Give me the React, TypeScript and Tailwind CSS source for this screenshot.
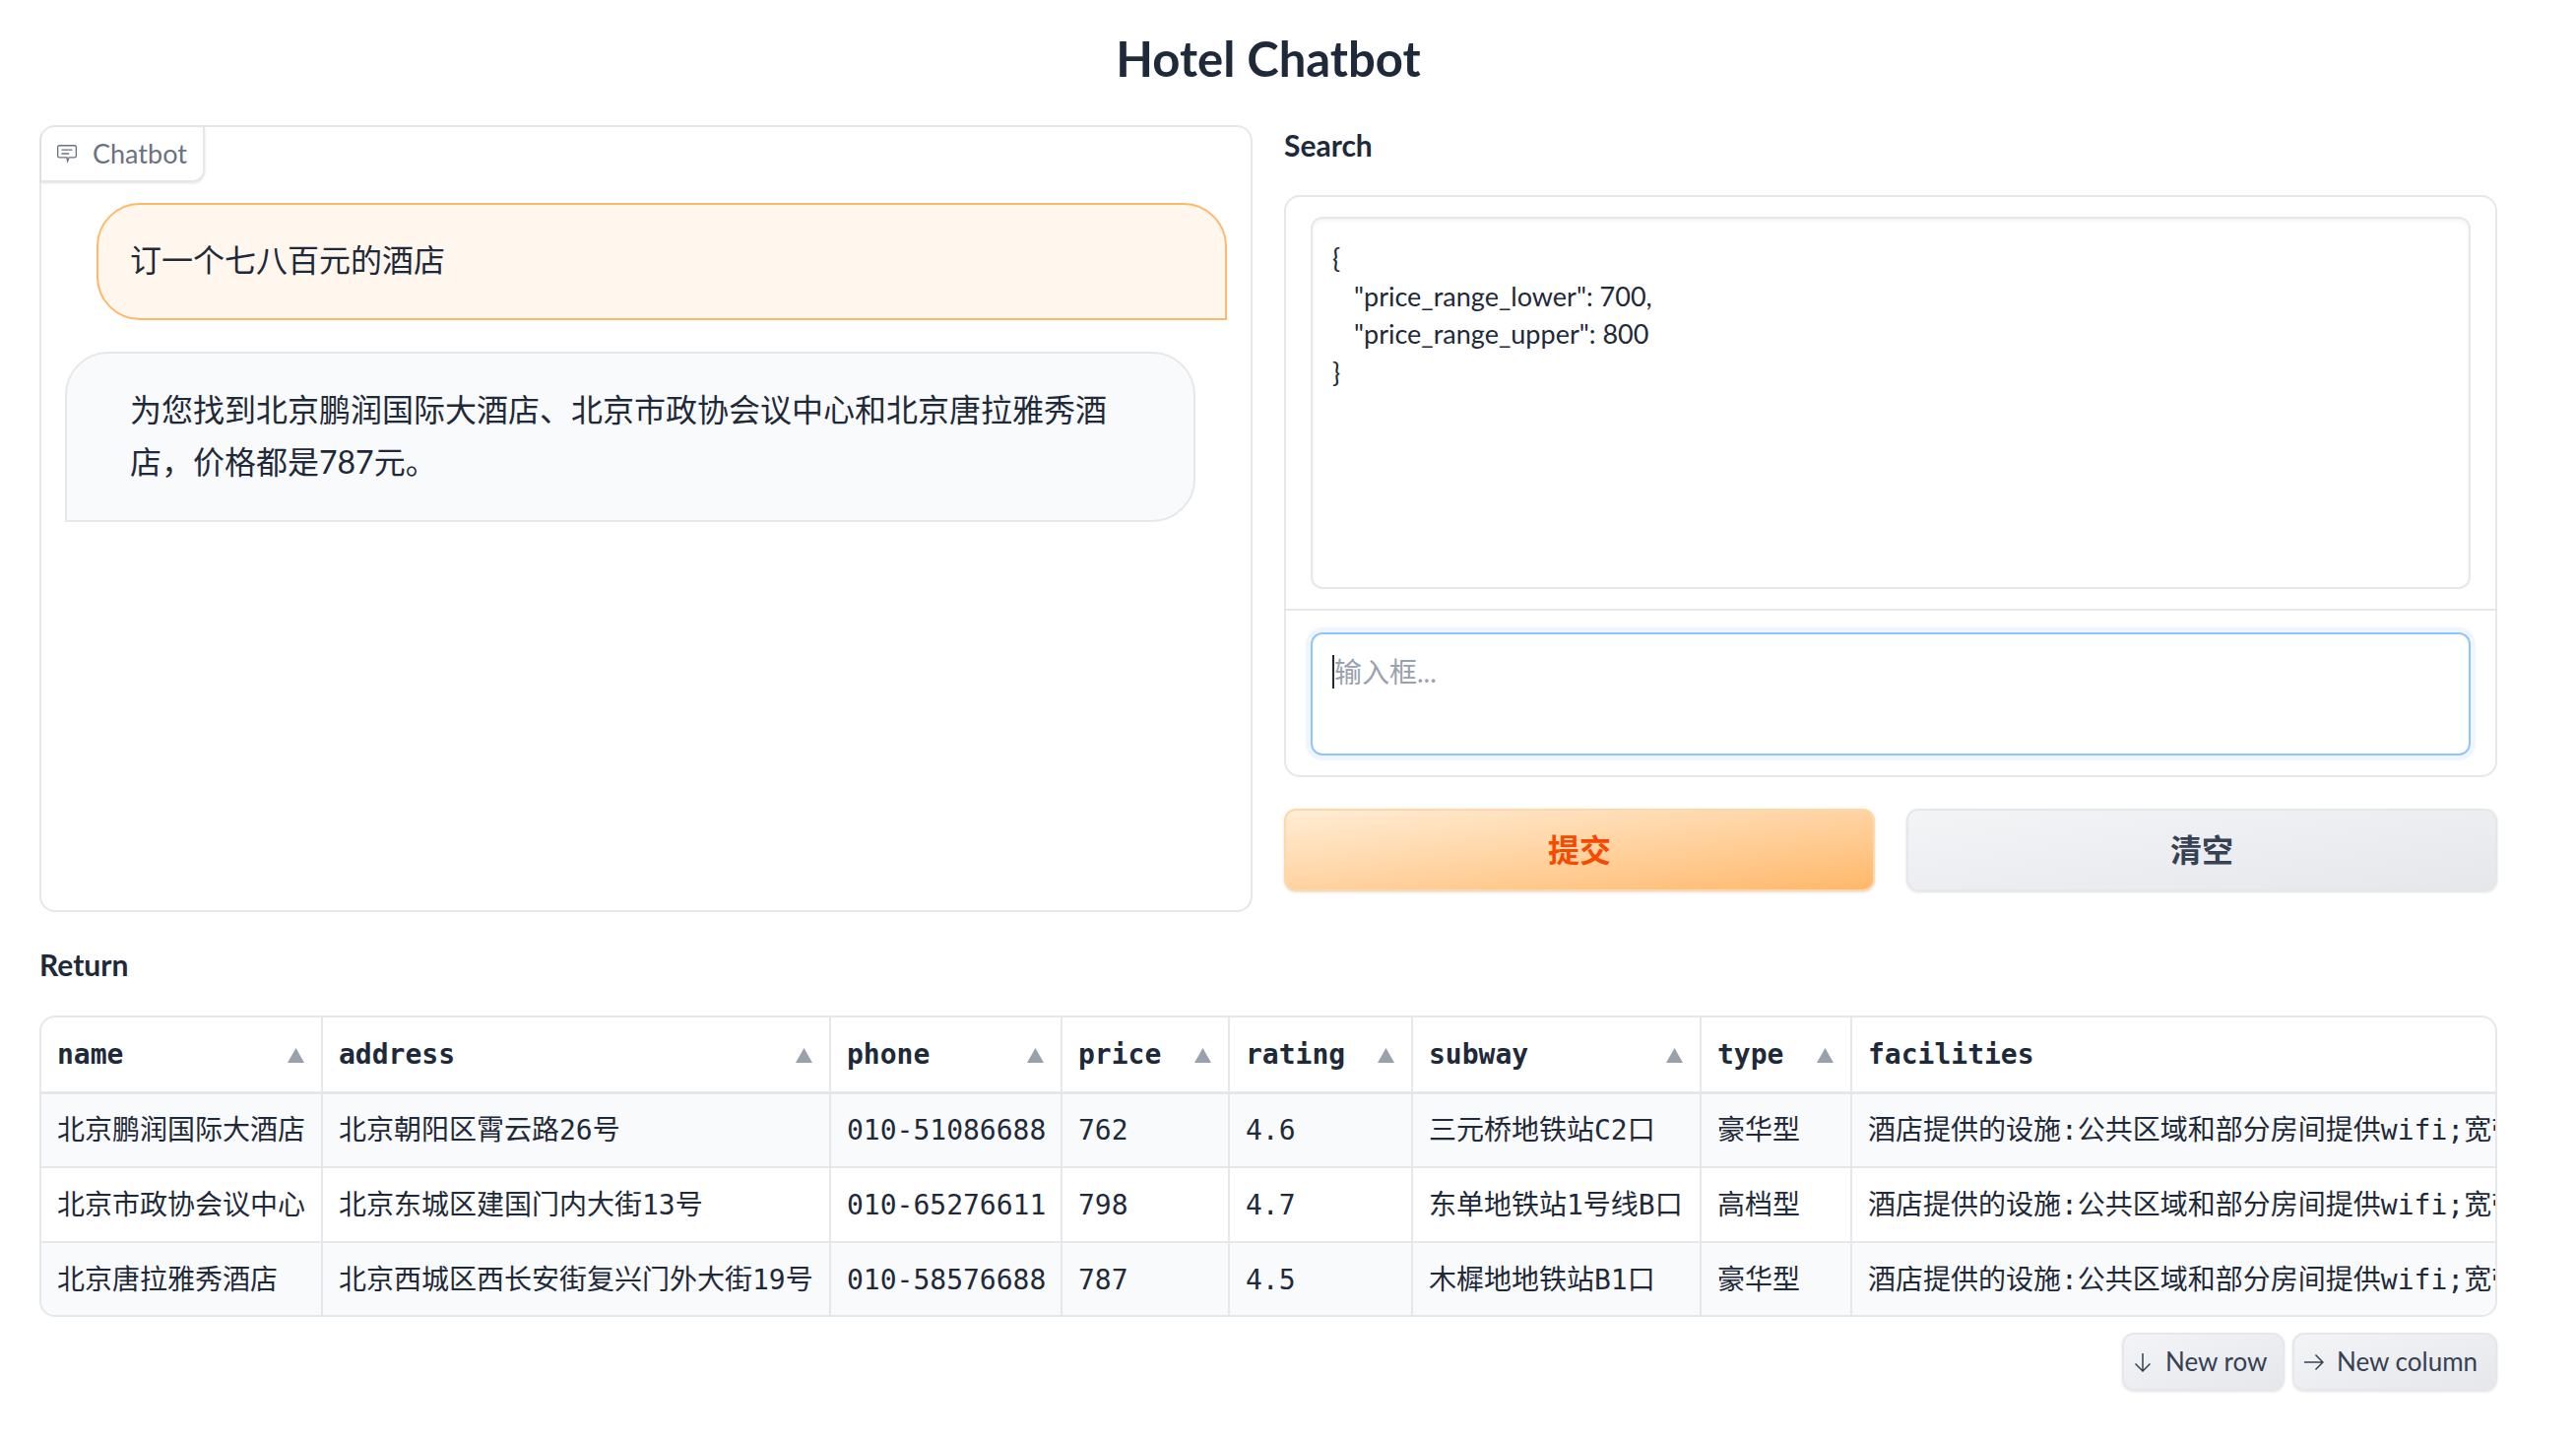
const columns = [
  { name: "name", width: "w-[285px]" },
  { name: "address", width: "w-[516px]" },
  { name: "phone", width: "w-[235px]" },
  { name: "price", width: "w-[170px]" },
  { name: "rating", width: "w-[186px]" },
  { name: "subway", width: "w-[293px]" },
  { name: "type", width: "w-[153px]" },
  { name: "facilities", width: "w-[654px]" },
];

const facilities = "酒店提供的设施:公共区域和部分房间提供wifi;宽带上网;吹风机;24小时热水;暖气";

const rows = [
  ["北京鹏润国际大酒店", "北京朝阳区霄云路26号", "010-51086688", "762", "4.6", "三元桥地铁站C2口", "豪华型", facilities],
  ["北京市政协会议中心", "北京东城区建国门内大街13号", "010-65276611", "798", "4.7", "东单地铁站1号线B口", "高档型", facilities],
  ["北京唐拉雅秀酒店", "北京西城区西长安街复兴门外大街19号", "010-58576688", "787", "4.5", "木樨地地铁站B1口", "豪华型", facilities],
];

const SortIcon = () => (
  <svg width="17" height="15" viewBox="0 0 17 15" className="mr-[1px] shrink-0 fill-gray-400">
    <polygon points="8.5,0 17,15 0,15" />
  </svg>
);

const ChatIcon = () => (
  <svg width="22" height="22" viewBox="0 0 20 20" fill="none" className="stroke-gray-500" strokeWidth="1.2">
    <path d="M3 2.5h14a1.5 1.5 0 0 1 1.5 1.5v8a1.5 1.5 0 0 1-1.500 1.500h-5l-1.500 3.500-0.500-3.500H3A1.500 1.500 0 0 1 1.500 12V4A1.500 1.500 0 0 1 3 2.500z" />
    <path d="M5 6.500h10M5 10h7" />
  </svg>
);

const DownIcon = () => (
  <svg width="18" height="20" viewBox="0 0 18 20" fill="none" className="stroke-gray-700" strokeWidth="1.5">
    <path d="M9 1v18M1.500 11.500 9 19l7.500-7.500" />
  </svg>
);

const RightIcon = () => (
  <svg width="21" height="18" viewBox="0 0 21 18" fill="none" className="stroke-gray-700" strokeWidth="1.5">
    <path d="M1 9h19M12.500 1.500 20 9l-7.500 7.500" />
  </svg>
);

const App = () => {
  return (
    <div className="min-h-[1464px] bg-white pr-20 pl-10 text-gray-800 font-['Lato','Noto_Sans_CJK_SC',sans-serif]">
      <h1 className="flex h-[127px] items-center justify-center pb-[8px] text-[49px] font-bold">Hotel Chatbot</h1>

      <div className="grid grid-cols-2 gap-8">
        <div className="h-[799px] rounded-2xl border-2 border-gray-200 bg-white">
          <div className="flex h-[56px] w-[166px] items-center gap-[15px] rounded-br-xl border-r-2 border-b-2 border-gray-200 pl-[15px] text-[27px] text-gray-500 shadow-sm">
            <ChatIcon />
            Chatbot
          </div>
          <div className="mt-[21px] mr-6 ml-[56px] flex h-[119px] items-center rounded-[44px] rounded-br-none border-2 border-orange-300 bg-orange-50 pb-[3px] pl-[32px] text-[32px]">
            订一个七八百元的酒店
          </div>
          <div className="mt-[32px] mr-[56px] ml-6 h-[173px] rounded-[44px] rounded-bl-none border-2 border-gray-200 bg-gray-50 pt-[30px] pr-[60px] pl-[64px] text-[32px] leading-[53px]">
            为您找到北京鹏润国际大酒店、北京市政协会议中心和北京唐拉雅秀酒店，价格都是787元。
          </div>
        </div>

        <div>
          <div className="flex h-[71px] items-center pb-[32px] text-[30px] font-bold leading-none">Search</div>
          <div className="rounded-2xl border-2 border-gray-200">
            <div className="px-[25px] py-5">
              <div className="h-[378px] rounded-xl border-2 border-gray-200 px-5 pt-[21px] text-[27px] leading-[38.700px] shadow-[inset_0_2px_4px_rgba(0,0,0,0.05)]">
                <div>{"{"}</div>
                <div className="pl-[22px]">"price_range_lower": 700,</div>
                <div className="pl-[22px]">"price_range_upper": 800</div>
                <div>{"}"}</div>
              </div>
            </div>
            <div className="border-t-2 border-gray-200 px-[25px] pt-[22px] pb-5">
              <div className="h-[125px] rounded-xl border-2 border-blue-300 px-5 pt-[19px] text-[28px] leading-[39px] text-gray-400 shadow-[0_0_0_5px_#eff6ff]">
                <span className="border-l-2 border-gray-800">输入框...</span>
              </div>
            </div>
          </div>
          <div className="mt-8 grid grid-cols-2 gap-8">
            <button className="h-[84px] rounded-xl border-2 border-orange-200 bg-gradient-to-br from-orange-100 to-orange-300 text-[32px] font-semibold text-orange-600 shadow-sm">
              提交
            </button>
            <button className="h-[84px] rounded-xl border-2 border-gray-200 bg-gradient-to-br from-gray-100 to-gray-200 text-[32px] font-semibold text-gray-700 shadow-sm">
              清空
            </button>
          </div>
        </div>
      </div>

      <div className="mt-[36px] flex h-[34px] items-center text-[30px] font-bold leading-none">Return</div>

      <div className="mt-[35px] overflow-hidden rounded-2xl border-2 border-gray-200 font-['DejaVu_Sans_Mono','Noto_Sans_CJK_SC',monospace] text-[28px]">
        <table className="w-full table-fixed border-collapse">
          <thead>
            <tr className="h-[76px] border-b-[3px] border-gray-200">
              {columns.map((col) => (
                <th key={col.name} className={`${col.width} border-r-2 border-gray-200 px-4 pt-[2px] text-left font-bold last:border-r-0`}>
                  <div className="flex items-center justify-between">
                    {col.name}
                    {col.name !== "facilities" && <SortIcon />}
                  </div>
                </th>
              ))}
            </tr>
          </thead>
          <tbody>
            {rows.map((row, i) => (
              <tr key={row[0]} className={`h-[76px] border-b-2 border-gray-200 last:h-[74px] last:border-b-0 ${i % 2 === 0 ? "bg-gray-50" : "bg-white"}`}>
                {row.map((cell, j) => (
                  <td key={j} className="overflow-hidden border-r-2 border-gray-200 px-4 pt-[2px] whitespace-nowrap last:border-r-0">
                    {cell}
                  </td>
                ))}
              </tr>
            ))}
          </tbody>
        </table>
      </div>

      <div className="mt-4 flex justify-end gap-2">
        <button className="flex h-[59px] w-[165px] items-center gap-[14px] rounded-xl border-2 border-gray-200 bg-gradient-to-br from-gray-100 to-gray-200 pl-[10px] text-[26px] text-gray-700 shadow-sm">
          <DownIcon />
          New row
        </button>
        <button className="flex h-[59px] w-[208px] items-center gap-[13px] rounded-xl border-2 border-gray-200 bg-gradient-to-br from-gray-100 to-gray-200 pl-[9px] text-[26px] text-gray-700 shadow-sm">
          <RightIcon />
          New column
        </button>
      </div>
    </div>
  );
};

export default App;
